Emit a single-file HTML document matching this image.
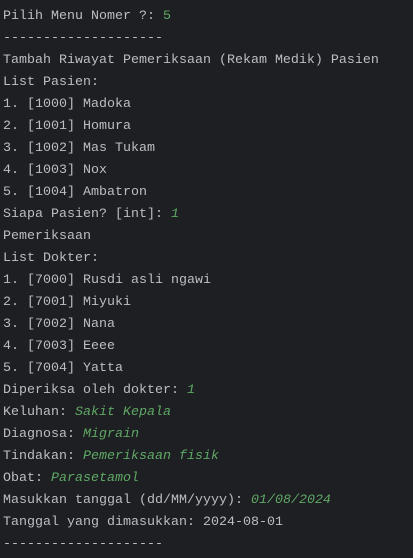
<!DOCTYPE html>
<html><head><style>
html,body{margin:0;padding:0;background:#1e1f22;width:413px;height:558px;overflow:hidden}
pre{margin:0;padding:6px 0 0 3px;font-family:"Liberation Mono",monospace;font-size:13.33px;line-height:22px;color:#bcbec4}
i{color:#5fa865;font-style:italic}
g{color:#5fa865}
</style></head><body><pre>Pilih Menu Nomer ?: <g>5</g>
--------------------
Tambah Riwayat Pemeriksaan (Rekam Medik) Pasien
List Pasien:
1. [1000] Madoka
2. [1001] Homura
3. [1002] Mas Tukam
4. [1003] Nox
5. [1004] Ambatron
Siapa Pasien? [int]: <i>1</i>
Pemeriksaan
List Dokter:
1. [7000] Rusdi asli ngawi
2. [7001] Miyuki
3. [7002] Nana
4. [7003] Eeee
5. [7004] Yatta
Diperiksa oleh dokter: <i>1</i>
Keluhan: <i>Sakit Kepala</i>
Diagnosa: <i>Migrain</i>
Tindakan: <i>Pemeriksaan fisik</i>
Obat: <i>Parasetamol</i>
Masukkan tanggal (dd/MM/yyyy): <i>01/08/2024</i>
Tanggal yang dimasukkan: 2024-08-01
--------------------</pre></body></html>
